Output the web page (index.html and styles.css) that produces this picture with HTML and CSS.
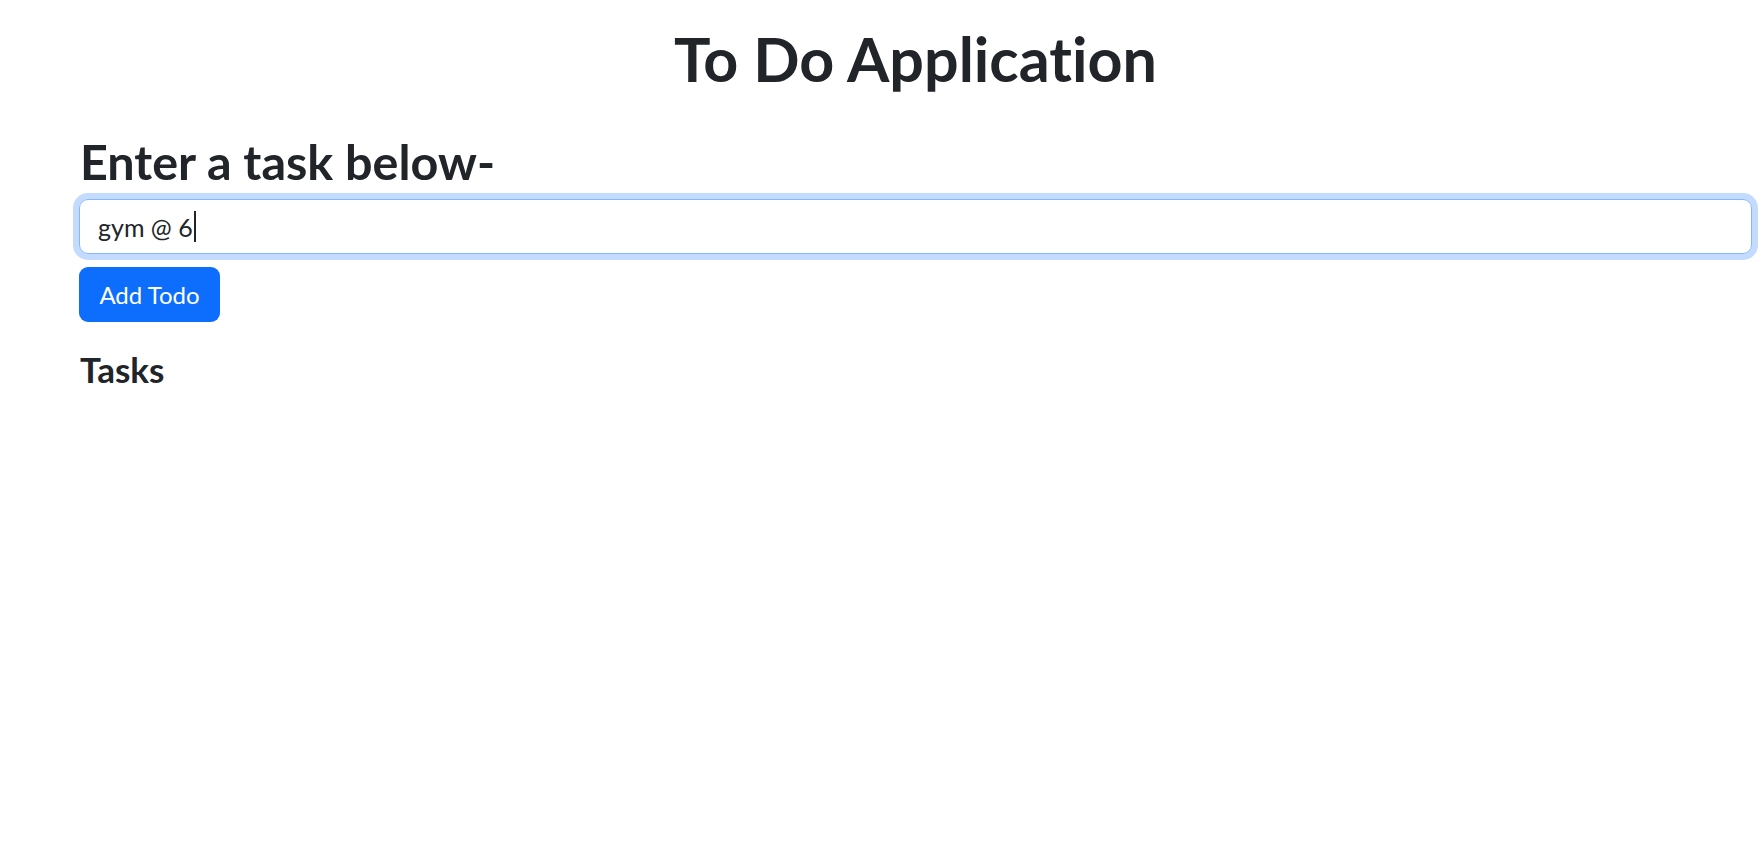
FILE: index.html
```html
<!DOCTYPE html>
<html lang="en">
<head>
<meta charset="utf-8">
<title>To Do Application</title>
<link rel="stylesheet" href="styles.css">
</head>
<body>
<main class="app">
  <h1 class="title">To Do Application</h1>
  <section class="entry">
    <h2 class="subtitle">Enter a task below-</h2>
    <div class="task-input" role="textbox" aria-label="Task"><span class="task-text">gym @ 6</span><span class="caret"></span></div>
    <button class="add-btn" type="button">Add Todo</button>
  </section>
  <h4 class="tasks-title">Tasks</h4>
</main>
</body>
</html>
```

FILE: styles.css
```css
* { box-sizing: border-box; }
html, body { margin: 0; padding: 0; background: #fff; }
body {
  font-family: Lato, "Open Sans", "Liberation Sans", sans-serif;
  font-variant-ligatures: none;
  color: #212529;
}
.app {
  padding: 0 12px 0 79px;
}
.title {
  margin: 0;
  padding: 22px 0 0;
  text-align: center;
  font-size: 61px;
  font-weight: 700;
  line-height: 74px;
}
.subtitle {
  margin: 37px 0 0 1px;
  font-size: 48.5px;
  font-weight: 700;
  line-height: 56px;
}
.task-input {
  margin-top: 10px;
  height: 55px;
  border: 1px solid #86b7fe;
  border-radius: 9px;
  box-shadow: 0 0 0 6px #c2dbfe;
  padding: 0 18px;
  display: flex;
  align-items: center;
  font-size: 25px;
}
.caret {
  display: inline-block;
  width: 2px;
  height: 31px;
  background: #212529;
  margin-left: 1px;
}
.add-btn {
  display: block;
  margin-top: 13px;
  height: 55px;
  width: 141px;
  border: 0;
  border-radius: 9px;
  background: #0d6efd;
  color: #fff;
  font-family: inherit;
  font-size: 24px;
  padding: 0 18px;
}
.tasks-title {
  margin: 26px 0 0 1px;
  font-size: 35px;
  font-weight: 700;
  line-height: 42px;
}
```
